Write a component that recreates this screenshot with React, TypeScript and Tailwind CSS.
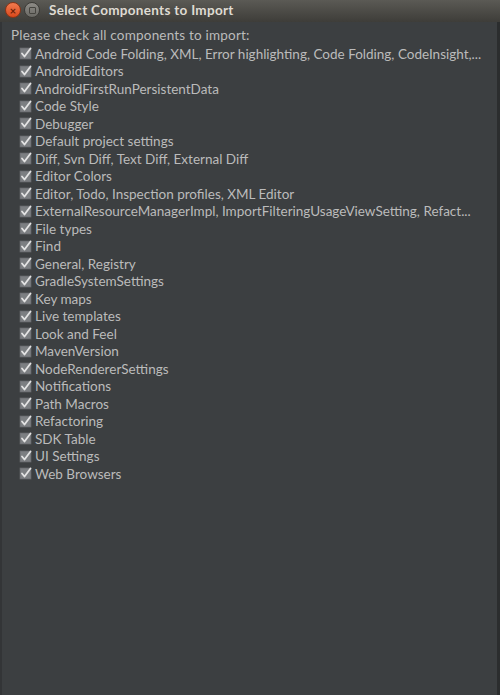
const items = [
  "Android Code Folding, XML, Error highlighting, Code Folding, CodeInsight,...",
  "AndroidEditors",
  "AndroidFirstRunPersistentData",
  "Code Style",
  "Debugger",
  "Default project settings",
  "Diff, Svn Diff, Text Diff, External Diff",
  "Editor Colors",
  "Editor, Todo, Inspection profiles, XML Editor",
  "ExternalResourceManagerImpl, ImportFilteringUsageViewSetting, Refact...",
  "File types",
  "Find",
  "General, Registry",
  "GradleSystemSettings",
  "Key maps",
  "Live templates",
  "Look and Feel",
  "MavenVersion",
  "NodeRendererSettings",
  "Notifications",
  "Path Macros",
  "Refactoring",
  "SDK Table",
  "UI Settings",
  "Web Browsers",
];

function CheckIcon() {
  return (
    <svg width="13" height="13" viewBox="0 0 13 13" className="shrink-0">
      <rect x="0.5" y="0.5" width="12" height="12" rx="1" fill="#6a6d70" stroke="#4a4d4f" />
      <rect x="1.5" y="1.5" width="10" height="10" fill="#7c7f82" />
      <path d="M3 6.5 L5.5 9.5 L11.5 1.5" fill="none" stroke="#e4e4e4" strokeWidth="1.8" strokeLinecap="round" strokeLinejoin="round" />
    </svg>
  );
}

export default function App() {
  return (
    <div
      className="w-[500px] h-[695px] flex flex-col bg-[#3c3f41] overflow-hidden"
      style={{ fontFamily: "Lato, 'Open Sans', sans-serif" }}
    >
      <div className="h-[22px] shrink-0 flex items-center gap-[3px] pl-[5px] pb-[2px] bg-gradient-to-b from-[#5b5a55] to-[#3e3d39]">
        <span className="w-[16px] h-[16px] rounded-full bg-gradient-to-b from-[#f27a4e] to-[#d9481a] border border-[#8a3416] flex items-center justify-center text-[#6b2006] text-[11px] leading-none font-bold">
          ×
        </span>
        <span className="w-[16px] h-[16px] rounded-full bg-gradient-to-b from-[#8d8b86] to-[#6a6964] border border-[#3c3b37] flex items-center justify-center">
          <span className="w-[7px] h-[7px] border border-[#45443f] rounded-[1px]" />
        </span>
        <span className="ml-[6px] text-[13.5px] font-bold text-[#dfdbd2] tracking-[0.3px]">
          Select Components to Import
        </span>
      </div>
      <div className="flex-1 flex border-l-[2px] border-r-[3px] border-l-[#333537] border-r-[#2b2d2e]">
        <div className="flex-1 pl-[9px] pt-[6px] text-[13.5px] text-[#bbbbbb]">
          <div className="leading-[15px] mb-[2px] tracking-[0.2px]">Please check all components to import:</div>
          <div className="flex flex-col pl-[8px]">
            {items.map((label) => (
              <div key={label} className="flex items-center gap-[3px] h-[17.5px] whitespace-nowrap">
                <CheckIcon />
                <span>{label}</span>
              </div>
            ))}
          </div>
        </div>
      </div>
    </div>
  );
}
